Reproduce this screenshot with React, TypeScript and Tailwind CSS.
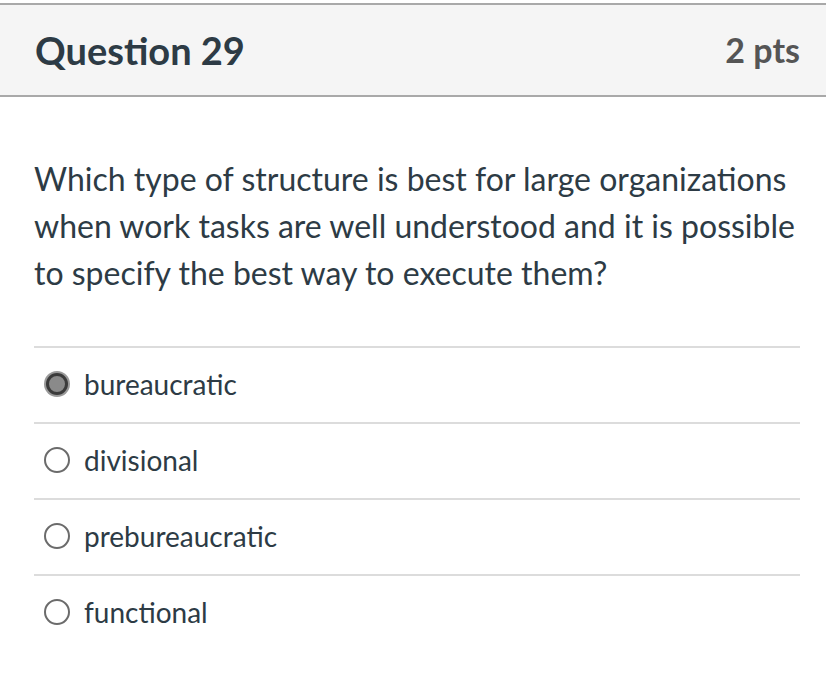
const options = [
  { label: "bureaucratic", selected: true },
  { label: "divisional", selected: false },
  { label: "prebureaucratic", selected: false },
  { label: "functional", selected: false },
];

function Radio({ selected }: { selected: boolean }) {
  if (selected) {
    return (
      <span className="flex h-[26px] w-[26px] shrink-0 items-center justify-center rounded-full bg-[#9a9a9a]">
        <span className="h-[22px] w-[22px] rounded-full border-[3px] border-[#3b3b3b] bg-[#8a8a8a]" />
      </span>
    );
  }
  return <span className="h-[26px] w-[26px] shrink-0 rounded-full border-2 border-[#6b6b6b] bg-white" />;
}

export default function App() {
  return (
    <div className="min-h-[676px] w-[826px] bg-white pt-[3px] font-['Lato','Noto_Sans',sans-serif] text-[#2d3b45]">
      <div className="flex h-[94px] items-center justify-between border-y-2 border-[#a9a9a9] bg-[#f5f5f5] pl-[35px] pr-[26px]">
        <h2 className="text-[38px] font-bold leading-none">Question 29</h2>
        <span className="text-[34px] font-bold leading-none text-[#555]">2 pts</span>
      </div>

      <div className="px-[34px] pt-[58px]">
        <p className="w-[766px] text-[32px] leading-[47px]">
          Which type of structure is best for large organizations when work tasks are well understood and it
          is possible to specify the best way to execute them?
        </p>

        <ul className="mt-[50px] w-[766px]">
          {options.map((o) => (
            <li key={o.label} className="flex h-[76px] items-center gap-[14px] border-t-2 border-[#dcdcdc] pb-[2px] pl-[10px]">
              <Radio selected={o.selected} />
              <span className="text-[28px] leading-none">{o.label}</span>
            </li>
          ))}
        </ul>
      </div>
    </div>
  );
}
